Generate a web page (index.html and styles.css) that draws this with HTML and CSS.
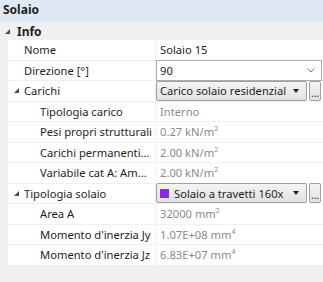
FILE: index.html
```html
<!DOCTYPE html>
<html>
<head>
<meta charset="utf-8">
<link rel="stylesheet" href="styles.css">
</head>
<body>
<div class="grid">
  <div class="title">Solaio</div>
  <div class="category"><span class="tri tri-cat"></span><span class="cat-label">Info</span></div>
  <div class="rows">
    <div class="row">
      <div class="gutter"></div>
      <div class="name lvl1">Nome</div>
      <div class="value"><span class="text">Solaio 15</span></div>
    </div>
    <div class="row">
      <div class="gutter"></div>
      <div class="name lvl1">Direzione [°]</div>
      <div class="value">
        <div class="combo"><span>90</span>
          <svg class="chev" width="8" height="5" viewBox="0 0 8 5"><path d="M0.5 0.5 L4 4 L7.5 0.5" fill="none" stroke="#7a7a7a" stroke-width="1"/></svg>
        </div>
      </div>
    </div>
    <div class="row">
      <div class="gutter"></div>
      <div class="name lvl1 exp"><span class="tri"></span>Carichi</div>
      <div class="value">
        <div class="editor">
          <div class="btn drop"><span class="drop-text">Carico solaio residenzial</span><span class="arrow"></span></div>
          <div class="btn dots">...</div>
        </div>
      </div>
    </div>
    <div class="row">
      <div class="gutter"></div>
      <div class="name lvl2">Tipologia carico</div>
      <div class="value ro"><span class="text">Interno</span></div>
    </div>
    <div class="row">
      <div class="gutter"></div>
      <div class="name lvl2">Pesi propri strutturali</div>
      <div class="value ro"><span class="text">0.27 kN/m<sup>2</sup></span></div>
    </div>
    <div class="row">
      <div class="gutter"></div>
      <div class="name lvl2">Carichi permanenti...</div>
      <div class="value ro"><span class="text">2.00 kN/m<sup>2</sup></span></div>
    </div>
    <div class="row">
      <div class="gutter"></div>
      <div class="name lvl2">Variabile cat A: Am...</div>
      <div class="value ro"><span class="text">2.00 kN/m<sup>2</sup></span></div>
    </div>
    <div class="row">
      <div class="gutter"></div>
      <div class="name lvl1 exp"><span class="tri"></span>Tipologia solaio</div>
      <div class="value">
        <div class="editor">
          <div class="btn drop"><span class="swatch"></span><span class="drop-text">Solaio a travetti 160x</span><span class="arrow"></span></div>
          <div class="btn dots">...</div>
        </div>
      </div>
    </div>
    <div class="row">
      <div class="gutter"></div>
      <div class="name lvl2">Area A</div>
      <div class="value ro"><span class="text">32000 mm<sup>2</sup></span></div>
    </div>
    <div class="row">
      <div class="gutter"></div>
      <div class="name lvl2">Momento d'inerzia Jy</div>
      <div class="value ro"><span class="text">1.07E+08 mm<sup>4</sup></span></div>
    </div>
    <div class="row">
      <div class="gutter"></div>
      <div class="name lvl2">Momento d'inerzia Jz</div>
      <div class="value ro"><span class="text">6.83E+07 mm<sup>4</sup></span></div>
    </div>
  </div>
</div>
</body>
</html>
```

FILE: styles.css
```css
html, body {
  margin: 0;
  padding: 0;
  background: #f0f0f0;
}
body {
  font-family: "Noto Sans", "Open Sans", sans-serif;
  font-size: 11.2px;
  color: #1e1e1e;
  width: 323px;
  height: 282px;
  overflow: hidden;
}
.grid {
  display: flex;
  flex-direction: column;
}
.title {
  height: 22px;
  background: #dfe8f4;
  font-weight: bold;
  font-size: 12px;
  padding-left: 3px;
  line-height: 19px;
  color: #1e1e1e;
}
.category {
  height: 18px;
  background: #f0f0f0;
  display: flex;
  align-items: center;
  font-weight: bold;
  font-size: 12px;
}
.tri {
  display: inline-block;
  width: 0;
  height: 0;
  border-left: 5px solid transparent;
  border-bottom: 5px solid #4a4a4a;
}
.tri-cat {
  margin-left: 5px;
  margin-right: 7px;
}
.rows {
  display: flex;
  flex-direction: column;
}
.row {
  display: flex;
  height: 20.5px;
}
.gutter {
  width: 8px;
  flex: none;
  background: #f0f0f0;
}
.name {
  width: 147px;
  flex: none;
  background: #ffffff;
  border-bottom: 1px solid #f0f0f0;
  display: flex;
  align-items: center;
  white-space: nowrap;
  overflow: hidden;
  box-sizing: border-box;
}
.lvl1 { padding-left: 16px; }
.lvl2 { padding-left: 32px; }
.exp { padding-left: 6px; }
.exp .tri { margin-right: 5px; }
.value {
  flex: 1;
  background: #ffffff;
  border-left: 1px solid #f0f0f0;
  border-bottom: 1px solid #f0f0f0;
  box-sizing: border-box;
  display: flex;
  align-items: center;
  min-width: 0;
}
.value .text {
  padding-left: 4px;
}
.ro { color: #8a8a8a; }
sup {
  font-size: 7px;
  vertical-align: 5px;
  line-height: 0;
}
.combo {
  flex: 1;
  height: 21px;
  box-sizing: border-box;
  border: 1px solid #abadb3;
  background: #ffffff;
  display: flex;
  align-items: center;
  padding-left: 3px;
  padding-right: 6px;
  margin-right: 1px;
}
.combo span { flex: 1; }
.editor {
  flex: 1;
  display: flex;
  gap: 2px;
  height: 20px;
  margin-right: 2px;
}
.btn {
  box-sizing: border-box;
  border: 1px solid #a0a0a0;
  border-radius: 2px;
  background: linear-gradient(#f4f4f4, #e2e2e2);
  display: flex;
  align-items: center;
}
.drop {
  flex: 1;
  padding-left: 3px;
  padding-right: 7px;
  min-width: 0;
}
.drop-text {
  flex: 1;
  white-space: nowrap;
  overflow: hidden;
}
.arrow {
  width: 0;
  height: 0;
  border-left: 3.5px solid transparent;
  border-right: 3.5px solid transparent;
  border-top: 4px solid #1e1e1e;
  margin-left: 4px;
}
.dots {
  width: 12px;
  flex: none;
  justify-content: center;
  font-size: 10px;
  line-height: 1;
  padding-top: 4px;
}
.swatch {
  width: 9px;
  height: 9px;
  background: #8a2be2;
  margin-right: 5px;
  flex: none;
}
```
